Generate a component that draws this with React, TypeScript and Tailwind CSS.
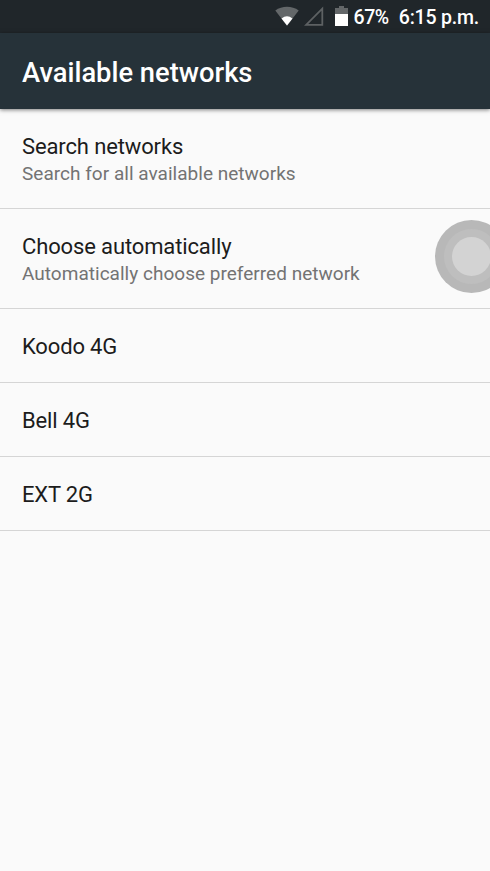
const networks = ["Koodo 4G", "Bell 4G", "EXT 2G"];

function StatusBar() {
  return (
    <div className="flex h-[33px] items-center justify-end bg-[#20262a] pr-[11px] text-[19.5px] font-medium text-white">
      <svg className="mb-px mr-[5px] h-[20px] w-[24px]" viewBox="0 0 24 20">
        <path d="M0.3 4.5C7 -0.4 17 -0.4 23.7 4.5L12 19.7Z" fill="#636769" />
        <path d="M6.5 12.4Q12 8.2 17.5 12.4L12 19.5Z" fill="#fff" />
      </svg>
      <svg className="mb-px mr-[11px] h-[20px] w-[20px]" viewBox="0 0 20 20">
        <path d="M18.3 2.6V18.8H2.1Z" fill="none" stroke="#5d6163" strokeWidth="1.8" />
      </svg>
      <svg className="mb-px mr-[5px] h-[20px] w-[13px]" viewBox="0 0 13 20">
        <path d="M4 0H9V2H13V8H0V2H4Z" fill="#636769" />
        <path d="M0 8H13V20H0Z" fill="#fff" />
      </svg>
      <span className="pt-[2px] tracking-[-0.4px]">67%</span>
      <span className="ml-[10px] pt-[2px] tracking-[-0.2px]">6:15 p.m.</span>
    </div>
  );
}

function App() {
  return (
    <div className="relative h-[871px] w-[490px] overflow-hidden bg-[#fafafa] font-['Roboto',sans-serif]">
      <StatusBar />
      <header className="flex h-[76px] items-center bg-[#263239] px-[22px] pt-[4px] shadow-[0_1px_4px_rgba(0,0,0,0.5)]">
        <h1 className="text-[27.3px] font-medium text-white">Available networks</h1>
      </header>

      <div className="h-[100px] border-b border-[#d5d5d5] px-[22px] pt-[23px]">
        <p className="text-[22px] leading-[30px] tracking-[-0.13px] text-[#1c1c1c]">Search networks</p>
        <p className="text-[19px] leading-[24px] tracking-[0.02px] text-[#737373]">Search for all available networks</p>
      </div>
      <div className="h-[100px] border-b border-[#d5d5d5] px-[22px] pt-[23px]">
        <p className="text-[22px] leading-[30px] tracking-[-0.13px] text-[#1c1c1c]">Choose automatically</p>
        <p className="text-[19px] leading-[24px] tracking-[0.02px] text-[#737373]">Automatically choose preferred network</p>
      </div>
      {networks.map((name) => (
        <div key={name} className="flex h-[74px] items-center border-b border-[#d5d5d5] px-[22px] pt-[2px]">
          <p className="text-[22px] tracking-[-0.15px] text-[#1c1c1c]">{name}</p>
        </div>
      ))}

      {/* floating assistive button */}
      <div className="absolute left-[435px] top-[220px] flex h-[73px] w-[73px] items-center justify-center rounded-full bg-[#b8b8b8]">
        <div className="flex h-[55px] w-[55px] items-center justify-center rounded-full bg-[#bebebe]">
          <div className="h-[39px] w-[39px] rounded-full bg-[#d3d3d3]" />
        </div>
      </div>
    </div>
  );
}

export default App;
